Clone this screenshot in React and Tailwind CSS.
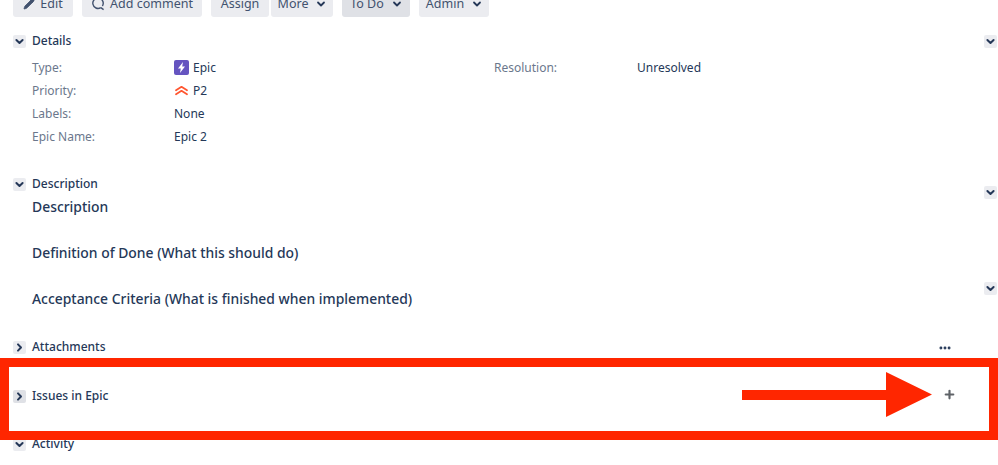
import React from 'react';
import { Pencil, Plus, MoreHorizontal } from 'lucide-react';

const font = { fontFamily: '"Noto Sans", sans-serif' };

const Chevron = ({ dir = 'down', className = '' }) => (
  <svg viewBox="0 0 13 13" className={`w-[13px] h-[13px] ${className}`}>
    <path
      d={dir === 'down' ? 'M3.4 5 L6.5 8 L9.6 5' : 'M5 3.4 L8 6.5 L5 9.6'}
      fill="none"
      stroke="#253858"
      strokeWidth="2"
      strokeLinecap="round"
      strokeLinejoin="round"
    />
  </svg>
);

const Toggle = ({ dir, dark }) => (
  <span className={`flex w-[13px] h-[13px] rounded-[2px] shrink-0 ${dark ? 'bg-[#dfe1e6]' : 'bg-[#ebecf0]'}`}>
    <Chevron dir={dir} />
  </span>
);

const ToolButton = ({ children, width, dark }) => (
  <button
    className={`flex items-center justify-center gap-[5px] h-[26px] rounded-b-[3px] text-[12.5px] text-[#42526e] ${width} ${dark ? 'bg-[#dfe1e6]' : 'bg-[#ebecf0]'}`}
  >
    {children}
  </button>
);

const SmallChevron = () => (
  <svg viewBox="0 0 10 10" className="w-[10px] h-[10px] ml-[3px]">
    <path d="M2 3.5 L5 6.5 L8 3.5" fill="none" stroke="#253858" strokeWidth="1.8" strokeLinecap="round" strokeLinejoin="round" />
  </svg>
);

const Heading = ({ dir = 'down', title, dark }) => (
  <div className="flex items-center gap-[6px] h-[20px]">
    <Toggle dir={dir} dark={dark} />
    <span className="text-[12px] font-medium text-[#253858]">{title}</span>
  </div>
);

const EpicIcon = () => (
  <svg viewBox="0 0 15 15" className="w-[15px] h-[15px] shrink-0">
    <rect width="15" height="15" rx="2" fill="#6554c0" />
    <path d="M9 2 L4 8.4 H6.8 L6 13 L11 6.6 H8.2 Z" fill="#fff" />
  </svg>
);

const PriorityIcon = () => (
  <svg viewBox="0 0 15 15" className="w-[15px] h-[15px] shrink-0">
    <path d="M2 7.2 L7.5 3.8 L13 7.2 M2 11.2 L7.5 7.8 L13 11.2" fill="none" stroke="#ff5630" strokeWidth="1.8" strokeLinecap="round" strokeLinejoin="round" />
  </svg>
);

const Field = ({ label, children }) => (
  <>
    <div className="text-[#6b778c]">{label}</div>
    <div className="flex items-center gap-1 text-[#253858]">{children}</div>
  </>
);

export default function App() {
  return (
    <div style={font} className="relative h-[465px] w-[998px] overflow-hidden bg-white">
      {/* Toolbar, cut off by the top of the picture */}
      <div className="flex -mt-[9px] pl-[13px] gap-[9px]">
        <ToolButton width="w-[60px]">
          <Pencil size={12} fill="#42526e" strokeWidth={1.5} />
          Edit
        </ToolButton>
        <ToolButton width="w-[120px]">
          <svg viewBox="0 0 14 14" className="w-[14px] h-[14px]">
            <path d="M9.8 10.6 A5.2 5.2 0 1 1 11.4 9 M9.8 10.6 L12.6 12.6" fill="none" stroke="#42526e" strokeWidth="1.4" />
          </svg>
          Add comment
        </ToolButton>
        <div className="flex gap-[2px]">
          <ToolButton width="w-[58px]">Assign</ToolButton>
          <ToolButton width="w-[62px]">
            More
            <SmallChevron />
          </ToolButton>
        </div>
        <ToolButton width="w-[68px]" dark>
          To Do
          <SmallChevron />
        </ToolButton>
        <ToolButton width="w-[70px]">
          Admin
          <SmallChevron />
        </ToolButton>
      </div>

      <div className="pl-[13px] pr-[1px]">
        {/* Details */}
        <div className="flex items-center justify-between mt-[14px]">
          <Heading title="Details" />
          <Toggle />
        </div>
        <div className="grid grid-cols-[142px_320px_143px_1fr] auto-rows-[23px] items-center pl-[19px] mt-[5px] text-[12px]">
          <Field label="Type:">
            <EpicIcon />
            Epic
          </Field>
          <Field label="Resolution:">Unresolved</Field>
          <Field label="Priority:">
            <PriorityIcon />
            P2
          </Field>
          <div className="col-span-2" />
          <Field label="Labels:">None</Field>
          <div className="col-span-2" />
          <Field label="Epic Name:">Epic 2</Field>
        </div>

        {/* Description */}
        <div className="mt-[26px]">
          <Heading title="Description" />
        </div>
        <div className="flex justify-between">
          <div className="pl-[19px] text-[13.9px] font-medium text-[#253858]">
            <div className="h-[46px] leading-[26px]">Description</div>
            <div className="h-[46px] leading-[26px]">Definition of Done (What this should do)</div>
            <div className="h-[46px] leading-[26px]">Acceptance Criteria (What is finished when implemented)</div>
          </div>
          <div className="flex flex-col -mt-[8px] gap-[83px]">
            <Toggle />
            <Toggle />
          </div>
        </div>

        {/* Attachments */}
        <div className="flex items-center justify-between mt-[5px] pr-[45px]">
          <Heading dir="right" title="Attachments" />
          <MoreHorizontal size={14} color="#253858" strokeWidth={3} className="mt-[1px]" />
        </div>

        {/* Issues in Epic */}
        <div className="flex items-center justify-between mt-[29px] pr-[41px]">
          <Heading dir="right" title="Issues in Epic" dark />
          <Plus size={13} color="#5f6368" strokeWidth={4} className="mb-[3px]" />
        </div>

        {/* Activity */}
        <div className="mt-[28px]">
          <Heading title="Activity" />
        </div>
      </div>

      {/* Red annotation on top of the page */}
      <div className="absolute left-0 right-0 top-[358px] h-[82px] border-[9px] border-[#ff2600]" />
      <svg viewBox="0 0 190 46" className="absolute left-[742px] top-[372px] w-[190px] h-[46px]">
        <path d="M0 18 H144 V0 L190 22.5 L144 45 V28 H0 Z" fill="#ff2600" />
      </svg>
    </div>
  );
}
